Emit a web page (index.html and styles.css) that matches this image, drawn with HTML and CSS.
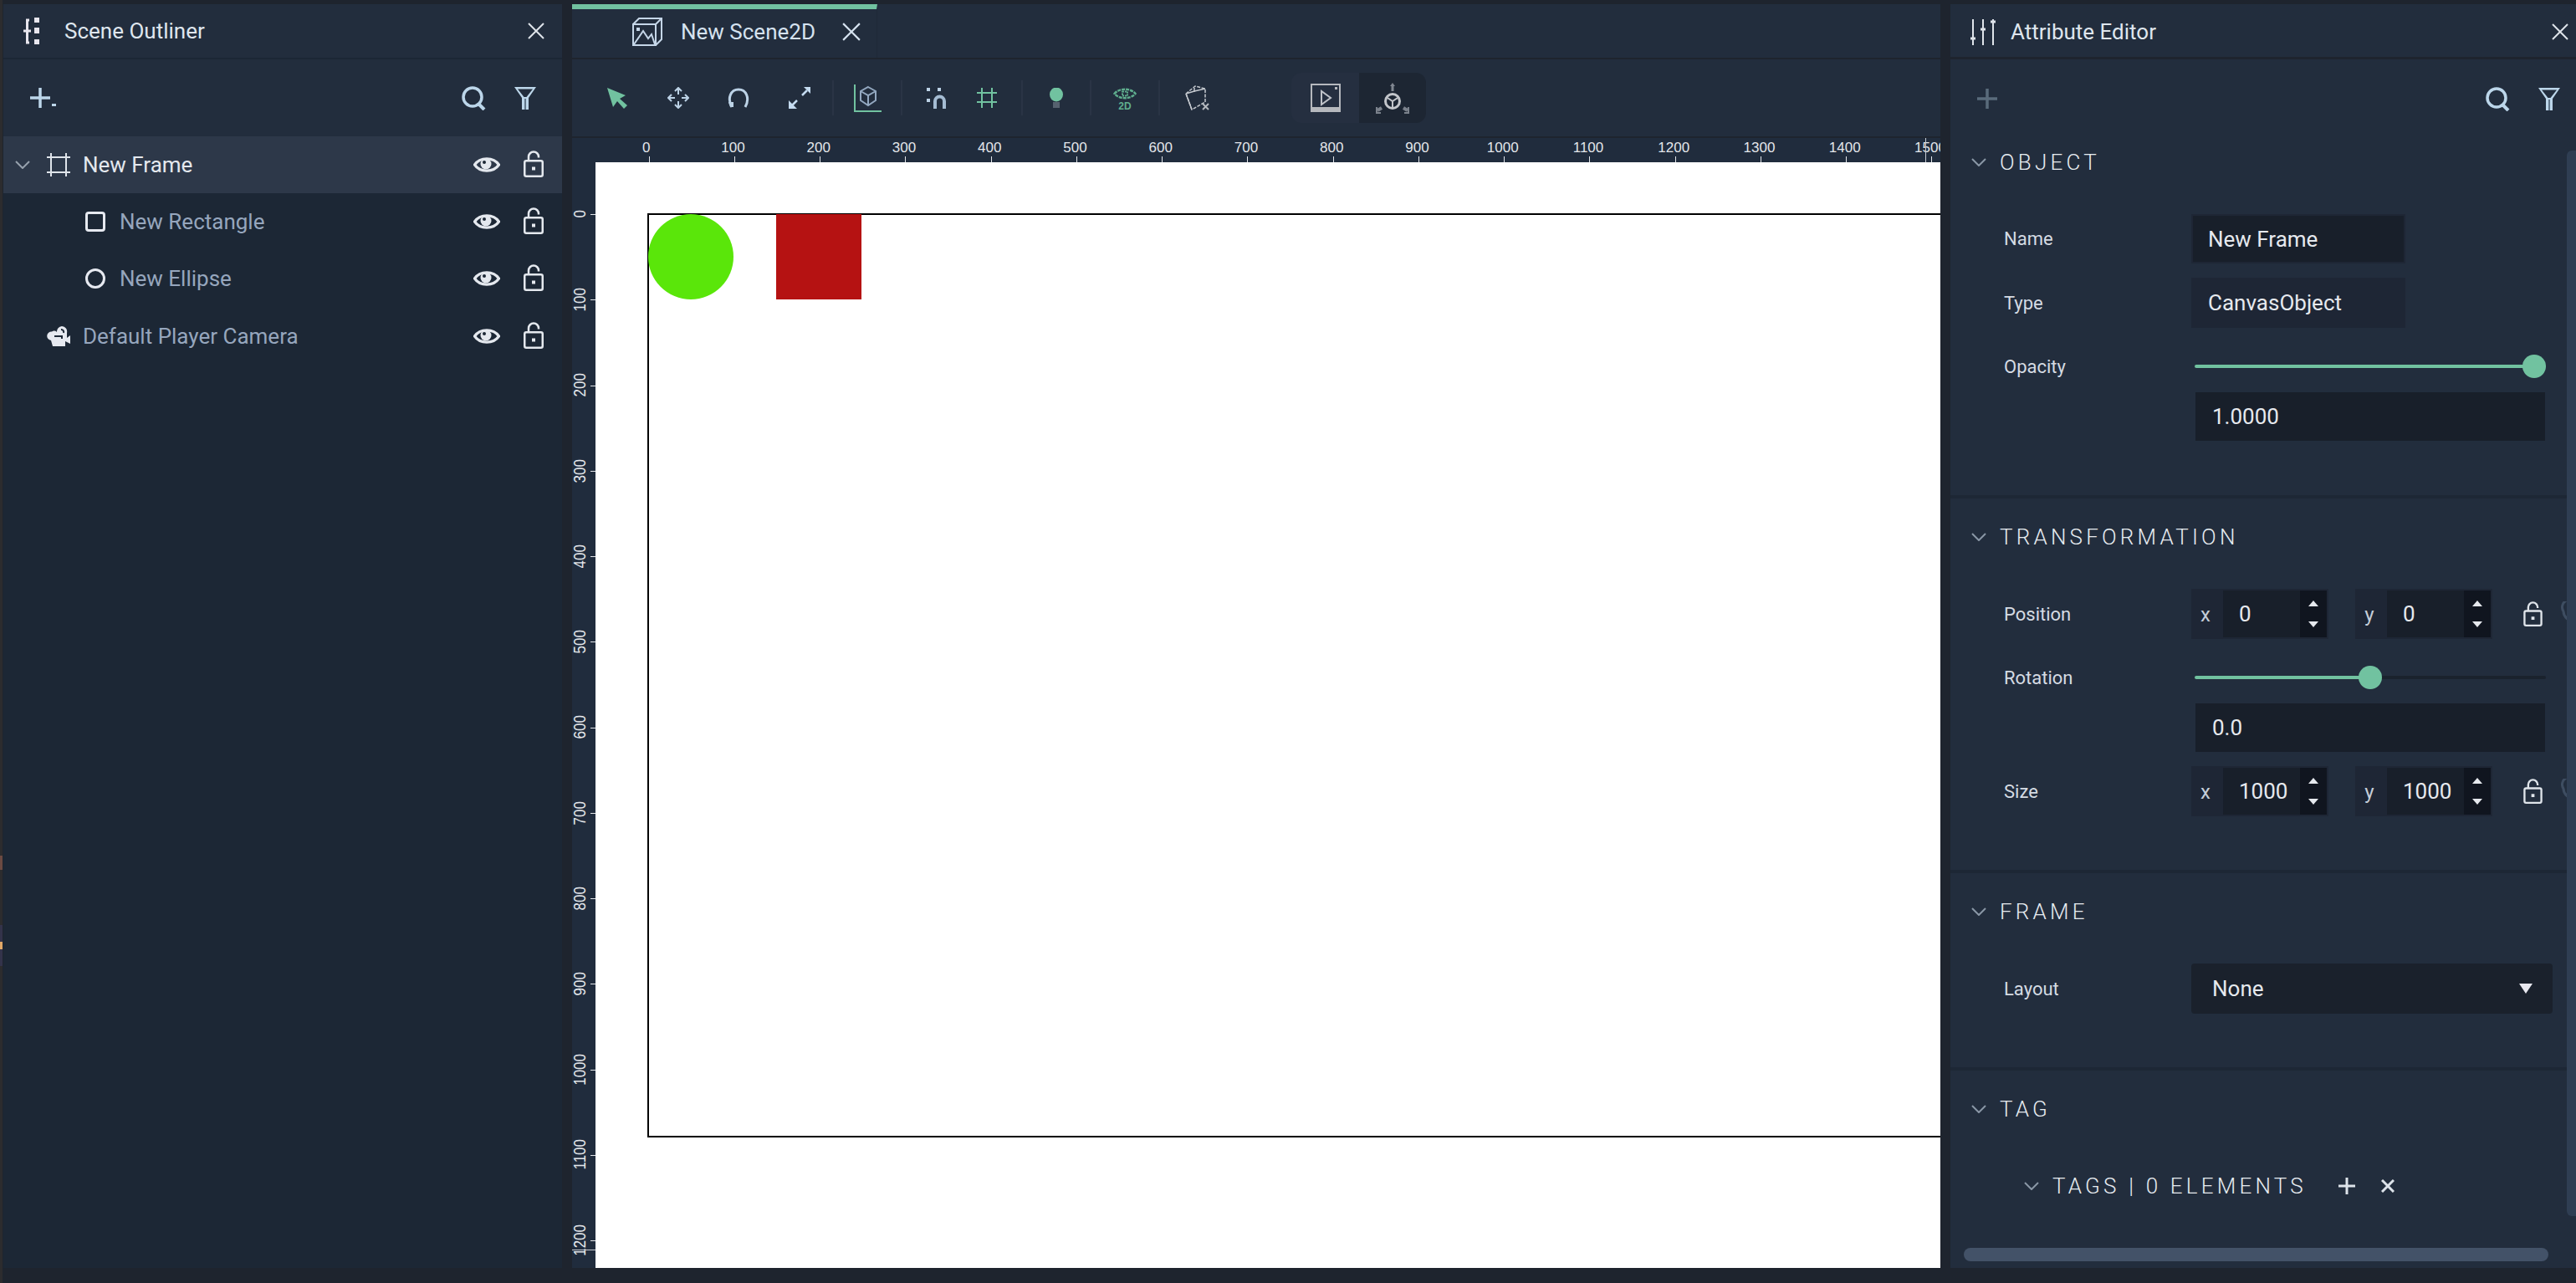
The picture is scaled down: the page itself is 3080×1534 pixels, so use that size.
FILE: index.html
```html
<!DOCTYPE html>
<html lang="en">
<head>
    <meta charset="UTF-8" />
    <title>Scene Editor</title>
    <link rel="stylesheet" href="styles.css">
</head>
<body>
    <svg class="defs" width="0" height="0">
        <symbol id="i-close" viewBox="0 0 20 20"><path d="M1 1 19 19M19 1 1 19" fill="none" stroke="currentColor" stroke-width="2"/></symbol>
        <symbol id="i-chevron" viewBox="0 0 18 10"><path d="M1 1 9 9 17 1" fill="none" stroke="currentColor" stroke-width="2"/></symbol>
        <symbol id="i-search" viewBox="0 0 29 29"><circle cx="13" cy="13" r="11" fill="none" stroke="currentColor" stroke-width="3.500"/><path d="M20 21 27 28" stroke="currentColor" stroke-width="4"/></symbol>
        <symbol id="i-filter" viewBox="0 0 28 28"><path d="M1 1H27L18 14V28H10V14Z M5 3.500H23L15.500 13H12.500Z" fill="currentColor" fill-rule="evenodd"/><path d="M14 15V28" stroke="#43566a" stroke-width="1.500"/></symbol>
        <symbol id="i-eye" viewBox="0 0 32 20"><path d="M1.500 10C8 0.500 24 0.500 30.500 10 24 19.500 8 19.500 1.500 10Z" fill="none" stroke="currentColor" stroke-width="3.200"/><circle cx="15" cy="9" r="6.500" fill="currentColor"/><circle cx="13" cy="7" r="2" fill="#1c2735"/></symbol>
        <symbol id="i-lock" viewBox="0 0 24 32"><rect x="1.250" y="12.250" width="21.500" height="18.500" rx="2" fill="none" stroke="currentColor" stroke-width="2.500"/><path d="M6 12V7.500A6 6 0 0 1 18 7.500V8.500" fill="none" stroke="currentColor" stroke-width="2.500"/><rect x="10" y="19.500" width="4" height="4" fill="currentColor"/></symbol>
    </svg>

    <div class="app">
        <div class="strip"><span class="strip-brown"></span><span class="strip-violet"><i></i></span></div>

        <!-- left panel -->
        <section class="panel outliner">
            <header class="panel-head">
                <svg class="head-icon-tree" viewBox="0 0 19 32" width="19" height="32">
                    <path d="M0 16H9M7 3H4.500V30H7" fill="none" stroke="#e8e6ee" stroke-width="3"/>
                    <rect x="13" y="0" width="6" height="6" fill="#e8e6ee"/>
                    <rect x="13" y="12" width="6" height="7" fill="#e8e6ee"/>
                    <rect x="13" y="26" width="6" height="6" fill="#e8e6ee"/>
                </svg>
                <span class="panel-title">Scene Outliner</span>
                <svg class="close"><use href="#i-close"/></svg>
            </header>
            <div class="panel-tools">
                <svg viewBox="0 0 32 24" width="32" height="24" class="add-icon">
                    <path d="M12 0V24M0 12H24" stroke="currentColor" stroke-width="3.500"/>
                    <rect x="26" y="19" width="5" height="3" fill="currentColor"/>
                </svg>
                <svg class="tool-search"><use href="#i-search"/></svg>
                <svg class="tool-filter"><use href="#i-filter"/></svg>
            </div>
            <ul class="tree">
                <li class="tree-row selected">
                    <svg class="row-chevron"><use href="#i-chevron"/></svg>
                    <svg class="row-icon" viewBox="0 0 28 28" width="28" height="28"><path d="M5 0V28M23 0V28M0 5H28M0 23H28" stroke="#dfe4ea" stroke-width="2" fill="none"/></svg>
                    <span class="row-label">New Frame</span>
                    <svg class="row-eye"><use href="#i-eye"/></svg>
                    <svg class="row-lock"><use href="#i-lock"/></svg>
                </li>
                <li class="tree-row child">
                    <svg class="row-icon-small" viewBox="0 0 24 24" width="24" height="24"><rect x="1.500" y="1.500" width="21" height="21" rx="2.500" fill="none" stroke="#e6e9f0" stroke-width="3"/></svg>
                    <span class="row-label">New Rectangle</span>
                    <svg class="row-eye"><use href="#i-eye"/></svg>
                    <svg class="row-lock"><use href="#i-lock"/></svg>
                </li>
                <li class="tree-row child">
                    <svg class="row-icon-small" viewBox="0 0 24 24" width="24" height="24"><circle cx="12" cy="12" r="10.500" fill="none" stroke="#e6e9f0" stroke-width="3"/></svg>
                    <span class="row-label">New Ellipse</span>
                    <svg class="row-eye"><use href="#i-eye"/></svg>
                    <svg class="row-lock"><use href="#i-lock"/></svg>
                </li>
                <li class="tree-row top">
                    <svg class="row-icon" viewBox="0 0 28 24" width="28" height="24">
                        <path d="M18 0A6.500 6.500 0 0 1 24 8V14L28 11V21L22 18V24H7L5 17A5 5 0 0 1 6 6.500 5 5 0 0 1 12 7 6.500 6.500 0 0 1 18 0Z" fill="#e6e9f0"/>
                        <path d="M9 12H18V15M17 4A3 3 0 0 1 20 8" fill="none" stroke="#1c2735" stroke-width="2"/>
                    </svg>
                    <span class="row-label">Default Player Camera</span>
                    <svg class="row-eye"><use href="#i-eye"/></svg>
                    <svg class="row-lock"><use href="#i-lock"/></svg>
                </li>
            </ul>
        </section>

        <!-- centre -->
        <main class="viewport">
            <header class="tabbar">
                <div class="tab">
                    <svg viewBox="0 0 36 34" width="36" height="34">
                        <path d="M1 8H28V33H1ZM1 8 8 1H35V26L28 33M28 8 35 1" fill="none" stroke="#c5d6e8" stroke-width="2"/>
                        <path d="M2 32 13 16 19 25 23 20 27 32" fill="none" stroke="#c5d6e8" stroke-width="2"/>
                        <rect x="5" y="12" width="4" height="4" fill="#c5d6e8"/>
                    </svg>
                    <span class="tab-title">New Scene2D</span>
                    <svg class="tab-close"><use href="#i-close"/></svg>
                </div>
            </header>

            <div class="toolbar">
                <div class="tool-set first">
                    <span class="tool">
                        <svg viewBox="0 0 24 25" width="24" height="25"><path d="M0 0 22 9 15 13 24 21 20 25 12 16 7 23Z" fill="#71c2a0"/></svg>
                    </span>
                    <span class="tool">
                        <svg viewBox="0 0 26 26" width="26" height="26"><path d="M9 5 13 1 17 5M13 1V9M9 21 13 25 17 21M13 25V17M5 9 1 13 5 17M1 13H9M21 9 25 13 21 17M25 13H17" fill="none" stroke="#bcd2e6" stroke-width="2"/></svg>
                    </span>
                    <span class="tool">
                        <svg viewBox="0 0 26 24" width="26" height="24"><path d="M5 23C-1 12 4 2 13 2S27 12 21 23" fill="none" stroke="#bcd2e6" stroke-width="3"/><path d="M1 17H7V23H3Z" fill="#bcd2e6"/></svg>
                    </span>
                    <span class="tool">
                        <svg viewBox="0 0 26 26" width="26" height="26">
                            <path d="M18 0H26V8ZM0 16V26H10Z" fill="#c4dbf0"/>
                            <path d="M22 4 16 10M4 22 10 16" stroke="#c4dbf0" stroke-width="2.500"/>
                        </svg>
                    </span>
                </div>
                <span class="sep"></span>
                <div class="tool-set wide">
                    <svg viewBox="0 0 34 35" width="34" height="35">
                        <path d="M2 1V33H34" fill="none" stroke="#71c2a0" stroke-width="2"/>
                        <path d="M18 4 27 9V20L18 26 9 20V9ZM9 9 18 14 27 9M18 14V26" fill="none" stroke="#93a8c0" stroke-width="2"/>
                    </svg>
                </div>
                <span class="sep"></span>
                <div class="tool-set pair">
                    <span class="tool-mid">
                        <svg viewBox="0 0 24 25" width="24" height="25">
                            <rect x="0" y="0" width="4" height="4" fill="#bcd2e6"/><rect x="13" y="0" width="4" height="4" fill="#bcd2e6"/><rect x="0" y="13" width="4" height="4" fill="#bcd2e6"/>
                            <path d="M10 25V16A5 5 0 0 1 21 16V25" fill="none" stroke="#a5bcd3" stroke-width="4"/>
                        </svg>
                    </span>
                    <span class="tool-mid">
                        <svg viewBox="0 0 24 24" width="24" height="24"><path d="M6 0V24M18 0V24M0 6H24M0 17H24" stroke="#71c2a0" stroke-width="2"/></svg>
                    </span>
                </div>
                <span class="sep"></span>
                <div class="tool-set wide">
                    <svg viewBox="0 0 16 24" width="16" height="24"><ellipse cx="8" cy="8" rx="8" ry="8.500" fill="#71c2a0"/><rect x="4" y="17" width="8" height="7" fill="#56616f"/></svg>
                </div>
                <span class="sep"></span>
                <div class="tool-set wide">
                    <svg class="eye-2d" viewBox="0 0 28 30" width="28" height="30">
                        <path d="M1.500 7C7 0 21 0 26.500 7 21 14 7 14 1.500 7Z" fill="none" stroke="#5fae8e" stroke-width="2.500" stroke-dasharray="4 1"/>
                        <rect x="11" y="4.500" width="6" height="5" fill="none" stroke="#5fae8e" stroke-width="2" stroke-dasharray="2 1"/>
                        <text x="14" y="26" text-anchor="middle" class="eye-label">2D</text>
                    </svg>
                </div>
                <span class="sep"></span>
                <div class="tool-set last">
                    <svg viewBox="0 0 29 30" width="29" height="30">
                        <path d="M1 10 12 1 24 4V20L8 29Z" fill="none" stroke="#c5c9cf" stroke-width="1.500" stroke-dasharray="4 1.500"/>
                        <path d="M1 10 11 7 24 4M11 3V8M8 29 1 10" fill="none" stroke="#c5c9cf" stroke-width="1.500"/>
                        <path d="M21 22 28 29M28 22 21 29" stroke="#b4b8be" stroke-width="2"/>
                    </svg>
                </div>
                <div class="view-switch">
                    <span class="switch-left">
                        <svg viewBox="0 0 36 34" width="36" height="34">
                            <path d="M0 0H36V34H0ZM2 2V28H34V2Z" fill="#b5b8bd" fill-rule="evenodd"/>
                            <path d="M13 9V25L24 17Z" fill="none" stroke="#bfc3c9" stroke-width="2"/>
                            <rect x="29" y="4" width="3" height="3" fill="#b5b8bd"/>
                        </svg>
                    </span>
                    <span class="switch-right">
                        <svg viewBox="0 0 40 37" width="40" height="37">
                            <path d="M20 0 23 4H21.500V10H18.500V4H17Z" fill="#808791"/>
                            <circle cx="20" cy="22" r="8.500" fill="none" stroke="#c3c6cb" stroke-width="3"/>
                            <path d="M14 18 20 22 26 18M20 22V30" fill="none" stroke="#c3c6cb" stroke-width="2"/>
                            <path d="M7 30 2 33M33 30 38 33" stroke="#7b828c" stroke-width="4"/>
                            <path d="M1 29V36H6M39 29V36H34" fill="none" stroke="#7b828c" stroke-width="2"/>
                        </svg>
                    </span>
                </div>
            </div>

            <div class="ruler-x">
                <span class="mark"><b>0</b></span><span class="mark"><b>100</b></span><span class="mark"><b>200</b></span><span class="mark"><b>300</b></span>
                <span class="mark"><b>400</b></span><span class="mark"><b>500</b></span><span class="mark"><b>600</b></span><span class="mark"><b>700</b></span>
                <span class="mark"><b>800</b></span><span class="mark"><b>900</b></span><span class="mark"><b>1000</b></span><span class="mark"><b>1100</b></span>
                <span class="mark"><b>1200</b></span><span class="mark"><b>1300</b></span><span class="mark"><b>1400</b></span><span class="mark"><b>1500</b></span>
                <i class="ruler-x-end"></i>
            </div>

            <div class="stage">
                <div class="ruler-y">
                    <span class="mark-y"><b>0</b></span><span class="mark-y"><b>100</b></span><span class="mark-y"><b>200</b></span><span class="mark-y"><b>300</b></span>
                    <span class="mark-y"><b>400</b></span><span class="mark-y"><b>500</b></span><span class="mark-y"><b>600</b></span><span class="mark-y"><b>700</b></span>
                    <span class="mark-y"><b>800</b></span><span class="mark-y"><b>900</b></span><span class="mark-y"><b>1000</b></span><span class="mark-y"><b>1100</b></span>
                    <span class="mark-y"><b>1200</b></span>
                    <i class="ruler-y-end"></i>
                </div>
                <div class="canvas">
                    <div class="frame">
                        <div class="shape-ellipse"></div>
                        <div class="shape-rect"></div>
                    </div>
                </div>
            </div>
        </main>

        <!-- right panel -->
        <aside class="panel attrs">
            <header class="panel-head attrs-head">
                <svg viewBox="0 0 30 31" width="30" height="31">
                    <path d="M3 0V31M15 0V31M27 0V31" stroke="#dfe4ea" stroke-width="2"/>
                    <path d="M0 23H6M12 12H18M24 3H30" stroke="#dfe4ea" stroke-width="3"/>
                </svg>
                <span class="panel-title">Attribute Editor</span>
                <svg class="close"><use href="#i-close"/></svg>
            </header>
            <div class="attrs-body">
                <div class="attrs-tools">
                    <svg viewBox="0 0 24 24" width="24" height="24" class="add-dim"><path d="M12 0V24M0 12H24" stroke="currentColor" stroke-width="3.500"/></svg>
                    <svg class="tool-search"><use href="#i-search"/></svg>
                    <svg class="tool-filter"><use href="#i-filter"/></svg>
                </div>

                <section class="group group-first">
                    <h3 class="group-head"><svg class="group-chevron"><use href="#i-chevron"/></svg>OBJECT</h3>
                    <div class="fields">
                        <div class="field"><label>Name</label><div class="input input-name">New Frame</div></div>
                        <div class="field"><label>Type</label><div class="input input-type">CanvasObject</div></div>
                        <div class="field field-slider"><label>Opacity</label><div class="slider"><span class="fill fill-full"></span><span class="thumb"></span></div></div>
                        <div class="field"><label></label><div class="input input-wide">1.0000</div></div>
                    </div>
                </section>

                <section class="group">
                    <h3 class="group-head"><svg class="group-chevron"><use href="#i-chevron"/></svg>TRANSFORMATION</h3>
                    <div class="fields">
                        <div class="field">
                            <label>Position</label>
                            <div class="vec-row">
                                <div class="vec"><span class="axis">x</span><span class="num">0</span><span class="spin"><i class="up"></i><i class="down"></i></span></div>
                                <div class="vec"><span class="axis">y</span><span class="num">0</span><span class="spin"><i class="up"></i><i class="down"></i></span></div>
                                <svg class="vec-lock"><use href="#i-lock"/></svg>
                                <svg class="vec-link" viewBox="0 0 18 30"><path d="M18 2A9 9 0 0 0 3 12C3 19 9 23 18 27" fill="none" stroke="#3e4d61" stroke-width="3"/></svg>
                            </div>
                        </div>
                        <div class="field field-slider"><label>Rotation</label><div class="slider"><span class="fill fill-half"></span><span class="thumb"></span></div></div>
                        <div class="field"><label></label><div class="input input-wide">0.0</div></div>
                        <div class="field">
                            <label>Size</label>
                            <div class="vec-row">
                                <div class="vec"><span class="axis">x</span><span class="num">1000</span><span class="spin"><i class="up"></i><i class="down"></i></span></div>
                                <div class="vec"><span class="axis">y</span><span class="num">1000</span><span class="spin"><i class="up"></i><i class="down"></i></span></div>
                                <svg class="vec-lock"><use href="#i-lock"/></svg>
                                <svg class="vec-link" viewBox="0 0 18 30"><path d="M18 2A9 9 0 0 0 3 12C3 19 9 23 18 27" fill="none" stroke="#3e4d61" stroke-width="3"/></svg>
                            </div>
                        </div>
                    </div>
                </section>

                <section class="group">
                    <h3 class="group-head"><svg class="group-chevron"><use href="#i-chevron"/></svg>FRAME</h3>
                    <div class="fields">
                        <div class="field"><label>Layout</label><div class="select"><span>None</span><i class="select-arrow"></i></div></div>
                    </div>
                </section>

                <section class="group group-last">
                    <h3 class="group-head"><svg class="group-chevron"><use href="#i-chevron"/></svg>TAG</h3>
                    <h3 class="group-head tags-head">
                        <svg class="group-chevron"><use href="#i-chevron"/></svg>TAGS | 0 ELEMENTS
                        <svg class="tags-add" viewBox="0 0 20 20"><path d="M10 0V20M0 10H20" stroke="currentColor" stroke-width="3"/></svg>
                        <svg class="tags-del" viewBox="0 0 16 16"><path d="M1 1 15 15M15 1 1 15" stroke="currentColor" stroke-width="3"/></svg>
                    </h3>
                </section>
                <div class="hscroll"></div>
                <div class="vscroll"></div>
            </div>
        </aside>
    </div>
</body>
</html>
```

FILE: styles.css
```css
* {
    box-sizing: border-box;
}
html, body {
    margin: 0;
    height: 100%;
    overflow: hidden;
    background-color: #1e242e;
}
body {
    font-family: Roboto, "Liberation Sans", sans-serif;
    font-size: 26px;
    color: #dfe4ea;
}
.defs {
    position: absolute;
}
.app {
    display: grid;
    grid-template-columns: 4px 668px 1636px 748px;
    height: 1534px;
    padding: 5px 0 18px;
}
.strip {
    display: flex;
    flex-direction: column;
    width: 3px;
    margin-top: -5px;
    margin-bottom: -18px;
    background-color: #2c2c2e;
}
.strip-brown {
    height: 17px;
    margin-top: 1023px;
    background-color: #6b4a42;
}
.strip-violet {
    display: flex;
    align-items: center;
    height: 49px;
    margin-top: 66px;
    background-color: #33334a;
}
.strip-violet i {
    width: 3px;
    height: 9px;
    background-color: #e0a868;
}

/* panels */
.panel {
    display: flex;
    flex-direction: column;
    overflow: hidden;
}
.panel-head {
    display: flex;
    align-items: center;
    height: 64px;
    background-color: #222d3d;
    flex-shrink: 0;
}
.panel-title {
    color: #dfe6ee;
}
.close {
    width: 20px;
    height: 20px;
    margin-left: auto;
    color: #dfe4ea;
}

/* outliner */
.outliner {
    background-color: #1c2735;
}
.outliner .panel-head {
    padding: 0 21px 0 24px;
}
.head-icon-tree {
    margin-right: 30px;
}
.panel-tools {
    display: flex;
    align-items: center;
    height: 92px;
    margin-top: 2px;
    padding: 0 30px 0 32px;
    background-color: #222d3d;
    color: #bcd6ea;
    flex-shrink: 0;
}
.add-icon {
    margin-right: auto;
}
.tool-search {
    width: 29px;
    height: 29px;
    color: #bcd6ea;
}
.tool-filter {
    width: 28px;
    height: 28px;
    margin-left: 33px;
    color: #bcd6ea;
}
.tree {
    list-style: none;
    margin: 0;
    padding: 0;
}
.tree-row {
    display: flex;
    align-items: center;
    height: 68.200px;
    padding-right: 22px;
    color: #96a6bd;
}
.tree-row.selected {
    background-color: #2d3849;
    color: #e4e8ee;
    padding-left: 14px;
}
.tree-row.child {
    padding-left: 98px;
}
.tree-row.top {
    padding-left: 52px;
}
.row-chevron {
    width: 18px;
    height: 10px;
    margin-right: 20px;
    color: #97a1ad;
}
.row-icon {
    margin-right: 15px;
}
.row-icon-small {
    margin-right: 17px;
}
.row-eye {
    width: 32px;
    height: 20px;
    margin-left: auto;
    color: #e4e8ee;
}
.row-lock {
    width: 24px;
    height: 32px;
    margin-left: 28px;
    margin-top: -2px;
    color: #e4e8ee;
}

/* centre */
.viewport {
    display: flex;
    flex-direction: column;
    margin-left: 12px;
    margin-right: 12px;
    width: 1636px;
    overflow: hidden;
    background-color: #1e242e;
}
.tabbar {
    height: 64px;
    background-color: #222d3d;
    flex-shrink: 0;
}
.tab {
    display: flex;
    align-items: center;
    width: 365px;
    height: 64px;
    padding-left: 72px;
    border-top: 6px solid #71c2a0;
    border-right: 1px solid #1f2937;
    padding-bottom: 4px;
}
.tab-title {
    margin-left: 22px;
    color: #d5e2ef;
}
.tab-close {
    width: 22px;
    height: 22px;
    margin-left: 32px;
    color: #d5e2ef;
}
.toolbar {
    display: flex;
    align-items: center;
    height: 92px;
    margin-top: 2px;
    background-color: #222d3d;
    flex-shrink: 0;
}
.tool-set {
    display: flex;
    align-items: center;
    justify-content: center;
    height: 60px;
}
.tool-set.first {
    width: 311px;
    justify-content: flex-start;
    padding-left: 18px;
}
.tool {
    display: flex;
    justify-content: center;
    width: 72.500px;
}
.tool-set.wide {
    width: 80px;
}
.tool-set.pair {
    width: 142px;
}
.tool-mid {
    display: flex;
    justify-content: center;
    width: 60px;
}
.tool-set.last {
    width: 88px;
}
.sep {
    width: 2px;
    height: 42px;
    background-color: #2a3445;
}
.eye-2d {
    margin-top: 6px;
}
.eye-label {
    font-family: "Liberation Sans", sans-serif;
    font-size: 12px;
    font-weight: 700;
    fill: #5fae8e;
}
.view-switch {
    display: flex;
    height: 60px;
    margin-left: 69px;
}
.switch-left {
    display: flex;
    align-items: center;
    justify-content: center;
    width: 81px;
    background-color: #252f40;
    border-radius: 12px 0 0 12px;
}
.switch-right {
    display: flex;
    align-items: center;
    justify-content: center;
    width: 80px;
    background-color: #1d2633;
    border-radius: 0 12px 12px 0;
}

/* rulers */
.ruler-x {
    position: relative;
    display: flex;
    height: 29px;
    margin-top: 2px;
    padding-left: 40.600px;
    background-color: #202c3d;
    overflow: hidden;
    flex-shrink: 0;
}
.mark {
    position: relative;
    flex: 0 0 102.250px;
    display: flex;
    justify-content: center;
    padding-right: 3px;
}
.mark:first-child {
    padding-right: 6px;
}
.mark b {
    font: 400 17px/1 "Liberation Sans", sans-serif;
    color: #e3e6ea;
    margin-top: 3px;
}
.mark::after {
    content: "";
    position: absolute;
    left: 50%;
    bottom: 0;
    width: 1px;
    height: 7px;
    background-color: #e3e6ea;
}
.ruler-x-end {
    position: absolute;
    left: 1618px;
    top: 0;
    bottom: 0;
    width: 1px;
    background-color: #c7ccd3;
}
.stage {
    display: flex;
    flex: 1;
    min-height: 0;
}
.ruler-y {
    position: relative;
    display: flex;
    flex-direction: column;
    width: 28px;
    padding-top: 10.900px;
    background-color: #202c3d;
    overflow: hidden;
    flex-shrink: 0;
}
.mark-y {
    position: relative;
    flex: 0 0 102.250px;
    display: flex;
    align-items: center;
    padding-left: 2px;
}
.mark-y b {
    font: 400 17px/15px "Liberation Sans", sans-serif;
    color: #e3e6ea;
    writing-mode: vertical-rl;
    transform: rotate(180deg) scaleX(1.200);
    white-space: nowrap;
}
.mark-y::after {
    content: "";
    position: absolute;
    right: 0;
    top: 50%;
    width: 6px;
    height: 1px;
    background-color: #e3e6ea;
}
.ruler-y-end {
    position: absolute;
    left: 0;
    right: 0;
    top: 1300px;
    height: 1px;
    background-color: #c7ccd3;
}
.canvas {
    position: relative;
    flex: 1;
    background-color: #fff;
    overflow: hidden;
}
.frame {
    position: absolute;
    left: 62px;
    top: 61px;
    width: 1700px;
    height: 1105px;
    border: 2px solid #000;
}
.shape-ellipse {
    position: absolute;
    left: -1px;
    top: -1px;
    width: 102px;
    height: 102px;
    border-radius: 50%;
    background-color: #5ae60a;
}
.shape-rect {
    position: absolute;
    left: 152px;
    top: -1px;
    width: 102px;
    height: 102px;
    background-color: #b51212;
}

/* attribute editor */
.attrs {
    margin-left: 24px;
    width: 748px;
}
.attrs-head {
    height: 63px;
    padding: 3px 9px 0 24px;
}
.attrs-head .panel-title {
    margin-left: 18px;
}
.attrs-body {
    position: relative;
    flex: 1;
    margin-top: 3px;
    background-color: #222d3d;
    overflow: hidden;
}
.attrs-tools {
    display: flex;
    align-items: center;
    height: 94px;
    padding: 0 18px 0 32px;
}
.add-dim {
    margin-right: auto;
    color: #5a6b7b;
}
.group {
    padding-top: 23px;
    border-bottom: 4px solid #1d2735;
}
.group-first {
    padding-top: 6px;
    height: 431px;
}
.group:nth-of-type(2) {
    height: 448px;
}
.group:nth-of-type(3) {
    height: 236px;
}
.group-last {
    border-bottom: 0;
}
.group-head {
    display: flex;
    align-items: center;
    height: 46px;
    margin: 0;
    padding-left: 25px;
    font-size: 26px;
    font-weight: 300;
    letter-spacing: 4.200px;
    color: #e6ebf0;
}
.group-chevron {
    width: 18px;
    height: 10px;
    margin-right: 16px;
    color: #8a97a6;
}
.tags-head {
    margin-top: 46px;
    padding-left: 88px;
}
.tags-add {
    width: 20px;
    height: 20px;
    margin-left: 38px;
    color: #dde3ea;
}
.tags-del {
    width: 16px;
    height: 16px;
    margin-left: 31px;
    color: #dde3ea;
}
.fields {
    margin-top: 39px;
}
.field {
    display: flex;
    align-items: center;
    margin-top: 17px;
    padding-left: 64px;
}
.field:first-child {
    margin-top: 0;
}
.field-slider {
    margin-top: 32px;
}
.field label {
    flex: 0 0 224px;
    font-size: 22px;
    color: #d5dbe3;
}
.input {
    display: flex;
    align-items: center;
    height: 60px;
    padding-left: 20px;
    color: #e6e9ee;
}
.input-name {
    width: 256px;
    height: 59px;
    background-color: #181f2a;
    border: 2px solid #1e2635;
    padding-left: 18px;
}
.input-type {
    width: 256px;
    background-color: #1e2635;
}
.input-wide {
    width: 418px;
    height: 58px;
    margin-left: 5px;
    background-color: #181f2a;
}
.slider {
    position: relative;
    width: 420px;
    height: 28px;
    margin-left: 4px;
}
.slider::before {
    content: "";
    position: absolute;
    left: 0;
    right: 0;
    top: 12px;
    height: 4px;
    border-radius: 2px;
    background-color: #1a222d;
}
.fill {
    position: absolute;
    left: 0;
    top: 12px;
    height: 4px;
    border-radius: 2px;
    background-color: #71c2a0;
}
.fill-full {
    width: 100%;
}
.fill-half {
    width: 50%;
}
.thumb {
    position: absolute;
    top: 0;
    width: 28px;
    height: 28px;
    border-radius: 50%;
    background-color: #71c2a0;
}
.fill-full + .thumb {
    left: 392px;
}
.fill-half + .thumb {
    left: 196px;
}
.vec-row {
    display: flex;
    align-items: center;
    column-gap: 32px;
}
.vec {
    display: flex;
    width: 164px;
    height: 60px;
    padding: 2px;
    background-color: #1e2635;
}
.axis {
    display: flex;
    align-items: center;
    justify-content: center;
    width: 36px;
    padding: 2px 6px 0 0;
    font-size: 24px;
    color: #c5ced9;
}
.num {
    display: flex;
    align-items: center;
    width: 92px;
    padding-left: 19px;
    background-color: #181f2a;
    color: #e6e9ee;
}
.spin {
    display: flex;
    flex-direction: column;
    justify-content: space-between;
    align-items: center;
    width: 32px;
    padding: 12px 0;
    background-color: #10151f;
}
.up, .down {
    width: 0;
    height: 0;
    border-left: 6px solid transparent;
    border-right: 6px solid transparent;
}
.up {
    border-bottom: 7px solid #e6e9ee;
}
.down {
    border-top: 7px solid #e6e9ee;
}
.vec-lock {
    width: 23px;
    height: 30px;
    margin-left: 5px;
    color: #dfe4ea;
}
.vec-link {
    width: 18px;
    height: 30px;
    margin-left: -10px;
    flex-shrink: 0;
}
.select {
    display: flex;
    align-items: center;
    justify-content: space-between;
    width: 432px;
    height: 60px;
    padding: 0 24px 0 25px;
    border-radius: 4px;
    background-color: #1a212c;
    color: #e6e9ee;
}
.select-arrow {
    width: 0;
    height: 0;
    border-left: 8.500px solid transparent;
    border-right: 8.500px solid transparent;
    border-top: 12px solid #e8e8f0;
}
.hscroll {
    width: 699px;
    height: 16px;
    margin: 51px 0 0 16px;
    border-radius: 8px;
    background-color: #435268;
}
.vscroll {
    position: absolute;
    right: 0;
    top: 109px;
    width: 11px;
    height: 1274px;
    border-radius: 6px 0 0 6px;
    background-color: #2f3e53;
}
```
